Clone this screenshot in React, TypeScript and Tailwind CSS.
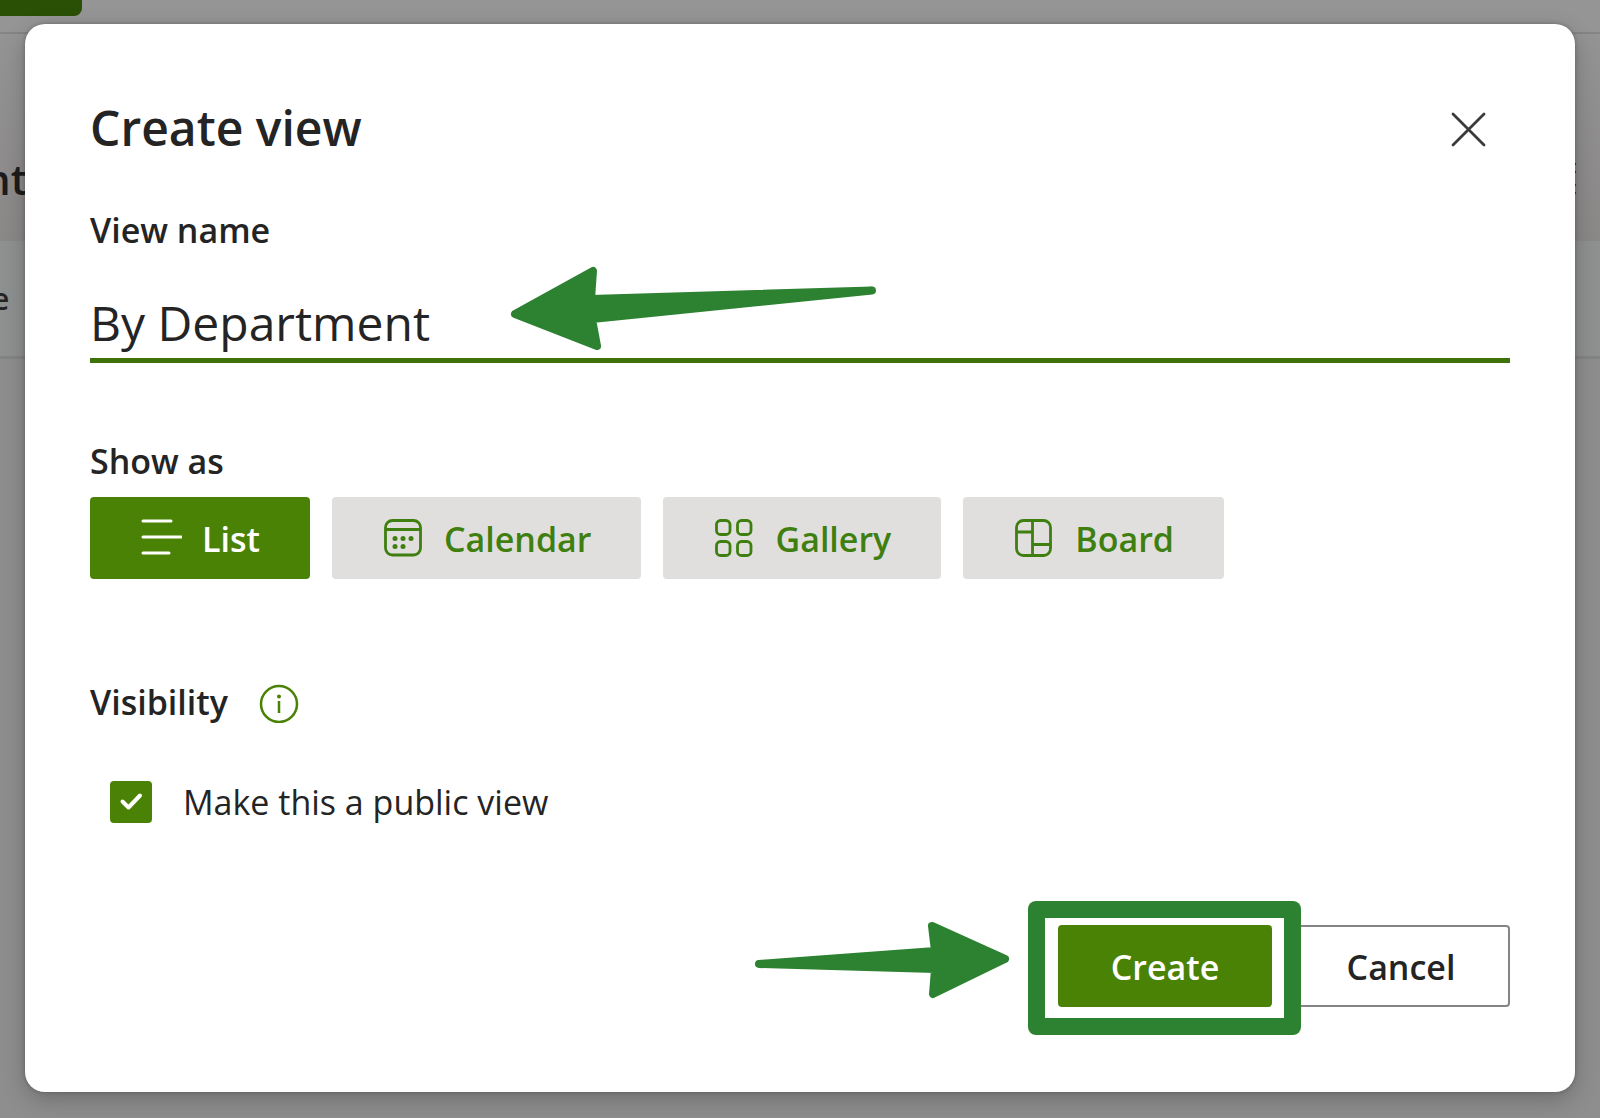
import { useState } from "react";
import type { ReactNode } from "react";

type ViewType = "List" | "Calendar" | "Gallery" | "Board";

function ListIcon() {
  return (
    <svg width="42" height="42" viewBox="0 0 42 42" fill="none" stroke="currentColor" strokeWidth="3" strokeLinecap="round">
      <path d="M3 4h28M3 20h38M3 36h26" />
    </svg>
  );
}

function CalendarIcon() {
  return (
    <svg width="42" height="42" viewBox="0 0 42 42" fill="none" stroke="currentColor" strokeWidth="2.800">
      <rect x="3.500" y="3.500" width="35" height="34.500" rx="7" />
      <path d="M3.500 12.500h35" />
      <g fill="currentColor" stroke="none">
        <circle cx="13" cy="21.500" r="2.500" />
        <circle cx="21" cy="21.500" r="2.500" />
        <circle cx="29" cy="21.500" r="2.500" />
        <circle cx="13" cy="29.500" r="2.500" />
        <circle cx="21" cy="29.500" r="2.500" />
      </g>
    </svg>
  );
}

function GalleryIcon() {
  return (
    <svg width="42" height="42" viewBox="0 0 42 42" fill="none" stroke="currentColor" strokeWidth="2.800">
      <rect x="3.500" y="3.500" width="13.500" height="14" rx="4" />
      <rect x="24.500" y="3.500" width="13.500" height="14" rx="4" />
      <rect x="3.500" y="24.500" width="13.500" height="14" rx="4" />
      <rect x="24.500" y="24.500" width="13.500" height="14" rx="4" />
    </svg>
  );
}

function BoardIcon() {
  return (
    <svg width="42" height="42" viewBox="0 0 42 42" fill="none" stroke="currentColor" strokeWidth="2.800">
      <rect x="3.500" y="3.500" width="34" height="35" rx="7" />
      <path d="M19.500 3.500V38M3.500 15h16M19.500 27.500h18" />
    </svg>
  );
}

const VIEW_TYPES: { name: ViewType; icon: ReactNode }[] = [
  { name: "List", icon: <ListIcon /> },
  { name: "Calendar", icon: <CalendarIcon /> },
  { name: "Gallery", icon: <GalleryIcon /> },
  { name: "Board", icon: <BoardIcon /> },
];

// Dimmed list page behind the dialog
function PageBackdrop() {
  return (
    <div aria-hidden="true" className="absolute inset-0 flex flex-col bg-[#8e8e8e] overflow-hidden">
      <div className="h-[34px] shrink-0 bg-[#959595] border-b-2 border-[#858585]">
        <div className="h-4 w-[82px] rounded-br-lg bg-[#2a5006]" />
      </div>
      <div className="h-[207px] shrink-0 flex items-end justify-between bg-linear-to-b from-[#949494] to-[#8b8888] pb-[34px]">
        <span className="text-[42px] leading-[56px] font-semibold text-[#1c1c1c] -ml-4">nt</span>
        <svg width="26" height="56" viewBox="0 0 26 56" stroke="#3c3c3c" strokeWidth="2">
          <path d="M0 13h2M0 21h2M0 34h2M0 42h2" />
        </svg>
      </div>
      <div className="h-[118px] shrink-0 flex items-center bg-[#8f9190] border-b-3 border-[#848484]">
        <span className="text-[30px] leading-10 font-semibold text-[#242424] -ml-2">e</span>
      </div>
    </div>
  );
}

export default function App() {
  const [name, setName] = useState("By Department");
  const [viewType, setViewType] = useState<ViewType>("List");
  const [isPublic, setIsPublic] = useState(true);

  return (
    <div className="relative min-h-screen px-[25px] pt-6 pb-[25px] font-['Open_Sans','Noto_Sans',sans-serif] text-[#242424]">
      <PageBackdrop />

      <div
        role="dialog"
        aria-labelledby="dialog-title"
        className="relative bg-white rounded-[20px] px-[65px] pt-[72px] pb-[85px] shadow-[0_8px_24px_rgba(0,0,0,0.22),0_0_4px_rgba(0,0,0,0.25)]"
      >
        <header className="flex items-center justify-between">
          <h1 id="dialog-title" className="text-[48px] leading-[64px] font-semibold">
            Create view
          </h1>
          <button type="button" aria-label="Close" className="mr-4 p-1">
            <svg width="42" height="42" viewBox="0 0 42 42" stroke="#3b3b3b" strokeWidth="2.800" strokeLinecap="round">
              <path d="M5 7l31 31M36 7l-31 31" />
            </svg>
          </button>
        </header>

        <label htmlFor="view-name" className="block mt-[46px] text-[34px] leading-[48px] font-semibold">
          View name
        </label>
        <div className="relative mt-9">
          <input
            id="view-name"
            type="text"
            value={name}
            onChange={(e) => setName(e.target.value)}
            className="block w-full h-[73px] pb-1 border-b-5 border-[#3f7208] text-[48px] leading-[64px] outline-none"
          />
          {/* pointer to the name field */}
          <svg
            className="absolute left-[420px] -top-6 pointer-events-none"
            width="370"
            height="86"
            viewBox="0 0 370 86"
            fill="#2d8231"
            stroke="#2d8231"
            strokeWidth="8"
            strokeLinejoin="round"
          >
            <path d="M5 48L83 5L81 33L362 24.500L82 53L87 80Z" />
          </svg>
        </div>

        <h2 id="show-as" className="mt-[74px] text-[34px] leading-[48px] font-semibold">
          Show as
        </h2>
        <div role="group" aria-labelledby="show-as" className="mt-3 flex flex-wrap gap-[22px]">
          {VIEW_TYPES.map((v) => (
            <button
              key={v.name}
              type="button"
              aria-pressed={viewType === v.name}
              onClick={() => setViewType(v.name)}
              className={`flex items-center gap-5 h-[82px] px-[50px] rounded text-[34px] leading-[48px] font-semibold ${
                viewType === v.name ? "bg-[#498205] text-white" : "bg-[#e1dfde] text-[#3f7f10]"
              }`}
            >
              {v.icon}
              <span className="pt-0.5">{v.name}</span>
            </button>
          ))}
        </div>

        <div className="mt-[99px] flex items-center gap-[30px]">
          <h2 className="text-[34px] leading-[48px] font-semibold">Visibility</h2>
          <button type="button" aria-label="About visibility">
            <svg width="42" height="42" viewBox="0 0 42 42" fill="none" stroke="#498205" strokeWidth="2.500">
              <circle cx="21" cy="23" r="18" />
              <path d="M21 20v12" />
              <circle cx="21" cy="15.500" r="2" fill="#498205" stroke="none" />
            </svg>
          </button>
        </div>

        <label className="mt-[52px] ml-5 flex items-center gap-[31px] text-[34px] leading-[48px]">
          <span className="grid size-[42px] shrink-0">
            <input
              type="checkbox"
              checked={isPublic}
              onChange={(e) => setIsPublic(e.target.checked)}
              className="peer col-start-1 row-start-1 appearance-none rounded border-2 border-[#498205] checked:bg-[#498205]"
            />
            <svg
              className="col-start-1 row-start-1 invisible peer-checked:visible pointer-events-none"
              width="42"
              height="42"
              viewBox="0 0 42 42"
              fill="none"
              stroke="white"
              strokeWidth="4"
              strokeLinecap="round"
              strokeLinejoin="round"
            >
              <path d="M12.500 20.500l6 6L30 14.500" />
            </svg>
          </span>
          Make this a public view
        </label>

        <footer className="mt-[99px] flex justify-end gap-5">
          <div className="relative z-10">
            <button
              type="button"
              className="h-[82px] w-[214px] pt-0.5 rounded bg-[#498205] text-white text-[34px] leading-[48px] font-semibold"
            >
              Create
            </button>
            {/* highlight and pointer around the primary action */}
            <div className="absolute -top-6 -bottom-7 -left-[30px] -right-[29px] rounded-lg bg-[#2d8231] p-[17px] -z-10">
              <div className="h-full bg-white" />
            </div>
            <svg
              className="absolute right-[259px] -top-2 pointer-events-none"
              width="260"
              height="86"
              viewBox="0 0 260 86"
              fill="#2d8231"
              stroke="#2d8231"
              strokeWidth="8"
              strokeLinejoin="round"
            >
              <path d="M6 47L182 34L179 9L252 42L180 77L182 52Z" />
            </svg>
          </div>
          <button
            type="button"
            className="h-[82px] w-[218px] pt-0.5 rounded border-2 border-[#858585] text-[34px] leading-[48px] font-semibold"
          >
            Cancel
          </button>
        </footer>
      </div>
    </div>
  );
}
